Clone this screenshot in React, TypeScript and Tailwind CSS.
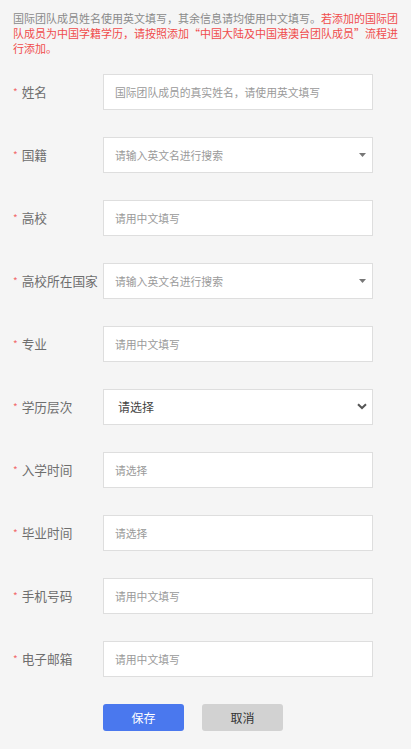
import React from "react";

type Field = {
  label: string;
  placeholder: string;
  kind: "input" | "search" | "select";
};

const fields: Field[] = [
  { label: "姓名", placeholder: "国际团队成员的真实姓名，请使用英文填写", kind: "input" },
  { label: "国籍", placeholder: "请输入英文名进行搜索", kind: "search" },
  { label: "高校", placeholder: "请用中文填写", kind: "input" },
  { label: "高校所在国家", placeholder: "请输入英文名进行搜索", kind: "search" },
  { label: "专业", placeholder: "请用中文填写", kind: "input" },
  { label: "学历层次", placeholder: "请选择", kind: "select" },
  { label: "入学时间", placeholder: "请选择", kind: "input" },
  { label: "毕业时间", placeholder: "请选择", kind: "input" },
  { label: "手机号码", placeholder: "请用中文填写", kind: "input" },
  { label: "电子邮箱", placeholder: "请用中文填写", kind: "input" },
];

function FieldRow({ field }: { field: Field }) {
  return (
    <div className="flex h-[36px] items-center">
      <div className="flex w-[103px] shrink-0 items-center pl-[13px] text-[12.7px] text-[#6e6e6e]">
        <span className="mr-[4px] text-[10px] text-[#f26b6b]">*</span>
        <span className="whitespace-nowrap">{field.label}</span>
      </div>
      <div className="relative flex h-[36px] w-[270px] items-center border border-[#dedede] bg-white">
        {field.kind === "select" ? (
          <>
            <span className="pl-[14px] text-[12px] text-[#444]">{field.placeholder}</span>
            <svg
              className="absolute right-[5px] top-[13px]"
              width="10"
              height="7"
              viewBox="0 0 10 7"
            >
              <path d="M1 1.2 5 5 9 1.2" fill="none" stroke="#555" strokeWidth="2" />
            </svg>
          </>
        ) : (
          <>
            <span className="pl-[11px] text-[10.8px] text-[#9a9a9a]">{field.placeholder}</span>
            {field.kind === "search" && (
              <svg
                className="absolute right-[6px] top-[15px]"
                width="7"
                height="4"
                viewBox="0 0 7 4"
              >
                <path d="M0 0h7L3.5 4z" fill="#777" />
              </svg>
            )}
          </>
        )}
      </div>
    </div>
  );
}

export default function App() {
  return (
    <div
      className="min-h-[749px] w-[411px] bg-[#f5f5f5] pb-[18px]"
      style={{ fontFamily: '"Noto Sans CJK SC", "Noto Sans", sans-serif' }}
    >
      <p className="pl-[13px] pr-[10px] pt-[11px] text-[11px] leading-[15px] text-[#8a8a8a]">
        国际团队成员姓名使用英文填写，其余信息请均使用中文填写。
        <span className="text-[#f04c4c]">
          若添加的国际团队成员为中国学籍学历，请按照添加“中国大陆及中国港澳台团队成员”流程进行添加。
        </span>
      </p>

      <div className="mt-[18px] flex flex-col gap-[27px]">
        {fields.map((f) => (
          <FieldRow key={f.label} field={f} />
        ))}

        <div className="flex gap-[18px] pl-[103px]">
          <button className="h-[27px] w-[81px] rounded-[3px] bg-[#4a78ee] text-[12px] text-white">
            保存
          </button>
          <button className="h-[27px] w-[81px] rounded-[3px] bg-[#d2d2d2] text-[12px] text-[#333]">
            取消
          </button>
        </div>
      </div>
    </div>
  );
}
